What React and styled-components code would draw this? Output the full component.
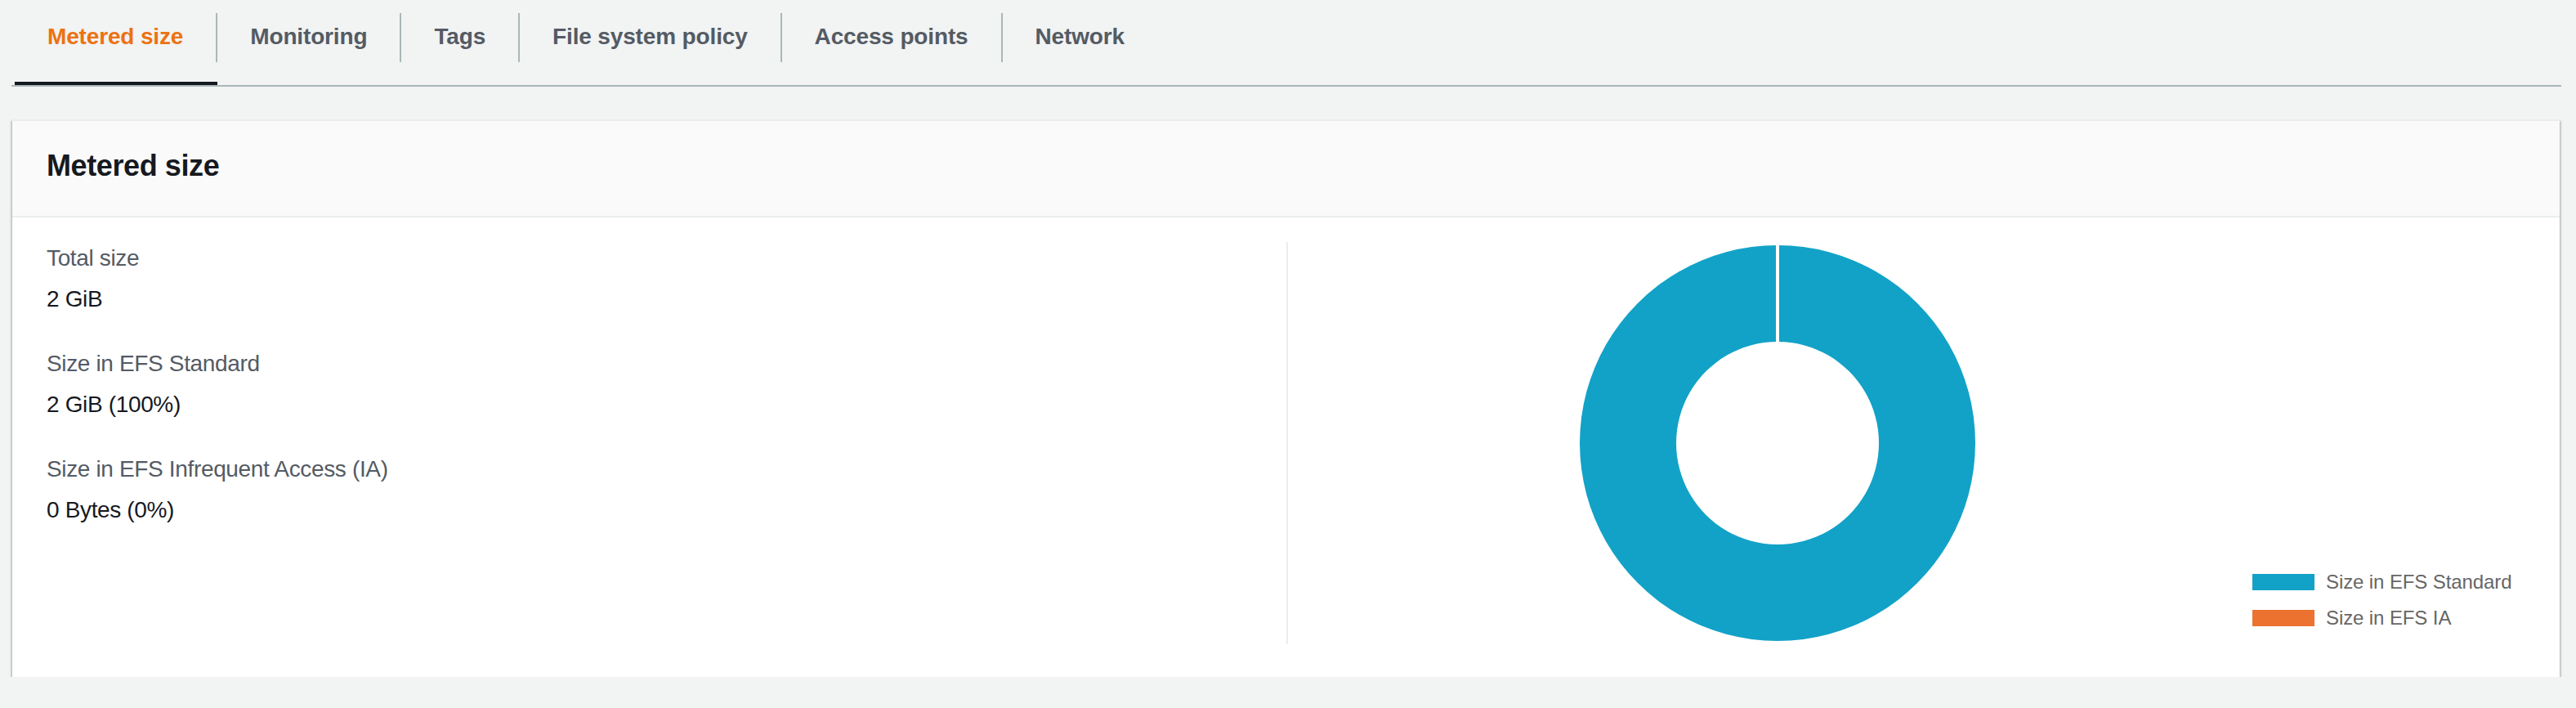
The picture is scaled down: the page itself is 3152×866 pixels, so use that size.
import React from 'react';
import styled, { createGlobalStyle } from 'styled-components';

// screenshot is a 2x capture, so every size here is doubled

const GlobalStyle = createGlobalStyle`
  html, body {
    margin: 0;
    padding: 0;
    background: #f2f3f3;
  }
  body {
    font-family: 'Liberation Sans', Arial, sans-serif;
    -webkit-font-smoothing: antialiased;
  }
`;

const Page = styled.div`
  padding: 0 18px 0 14px;
`;

const TabList = styled.ul`
  display: flex;
  margin: 0;
  padding: 0 0 0 4px;
  list-style: none;
  border-bottom: 2px solid #aab7b8;
`;

const Tab = styled.li`
  padding-top: 16px;
  border-bottom: 4px solid ${(p) => (p.active ? '#16191f' : 'transparent')};
`;

const TabLink = styled.a`
  display: block;
  margin-bottom: 24px;
  padding: 7px 40px 9px;
  line-height: 44px;
  font-size: 28px;
  font-weight: 700;
  letter-spacing: -0.15px;
  color: ${(p) => (p.active ? '#ec7211' : '#545b64')};
  border-right: 2px solid ${(p) => (p.last ? 'transparent' : '#aab7b8')};
  cursor: pointer;
  white-space: nowrap;
`;

const Card = styled.section`
  margin: 40px 2px 0 1px;
  background: #fff;
  border-top: 2px solid #eaeded;
  box-shadow: 0 2px 2px 0 rgba(0, 28, 36, 0.3), 2px 2px 2px 0 rgba(0, 28, 36, 0.15),
    -2px 2px 2px 0 rgba(0, 28, 36, 0.15);
`;

const CardHeader = styled.div`
  background: #fafafa;
  border-bottom: 2px solid #eaeded;
  padding: 31px 42px 37px;
`;

const Title = styled.h2`
  margin: 0;
  font-size: 36px;
  line-height: 48px;
  font-weight: 700;
  letter-spacing: -0.4px;
  color: #16191f;
`;

const CardBody = styled.div`
  display: grid;
  grid-template-columns: 1fr 1fr;
  padding: 30px 42px 40px;
`;

const Details = styled.div`
  display: flex;
  flex-direction: column;
  gap: 39px;
`;

const Pair = styled.div`
  display: flex;
  flex-direction: column;
  gap: 10px;
`;

const Label = styled.div`
  font-size: 28px;
  line-height: 40px;
  letter-spacing: -0.35px;
  color: #545b64;
`;

const Value = styled.div`
  font-size: 28px;
  line-height: 40px;
  letter-spacing: -0.35px;
  color: #16191f;
`;

const ChartColumn = styled.div`
  display: flex;
  height: 492px;
  border-left: 2px solid #eaeded;
  padding-left: 40px;
`;

const ChartArea = styled.div`
  flex: 1;
  display: flex;
  align-items: center;
  justify-content: center;
`;

const Legend = styled.ul`
  align-self: flex-end;
  display: flex;
  flex-direction: column;
  gap: 24px;
  width: 315px;
  margin: 0 19px 22px 22px;
  padding: 0;
  list-style: none;
`;

const LegendItem = styled.li`
  display: flex;
  align-items: center;
  gap: 14px;
  height: 20px;
  font-family: 'Liberation Sans', Helvetica, Arial, sans-serif;
  font-size: 24px;
  line-height: 24px;
  letter-spacing: -0.1px;
  color: #666;
  white-space: nowrap;
`;

const Swatch = styled.span`
  flex: none;
  width: 76px;
  height: 20px;
  background: ${(p) => p.color};
`;

const tabs = ['Metered size', 'Monitoring', 'Tags', 'File system policy', 'Access points', 'Network'];

const details = [
  { label: 'Total size', value: '2 GiB' },
  { label: 'Size in EFS Standard', value: '2 GiB (100%)' },
  { label: 'Size in EFS Infrequent Access (IA)', value: '0 Bytes (0%)' },
];

const STANDARD = '#12a2c7';
const IA = '#ec7230';

const Donut = ({ size = 484, inner = 124 }) => {
  const c = size / 2;
  const r = size / 2;
  const ring = `M ${c} ${c - r} A ${r} ${r} 0 1 1 ${c - 0.01} ${c - r} Z
    M ${c} ${c - inner} A ${inner} ${inner} 0 1 0 ${c + 0.01} ${c - inner} Z`;
  return (
    <svg width={size} height={size} viewBox={`0 0 ${size} ${size}`}>
      <path d={ring} fill={STANDARD} fillRule="evenodd" />
      <line x1={c} y1={0} x2={c} y2={c - inner + 1} stroke="#fff" strokeWidth="4" />
    </svg>
  );
};

export default function App() {
  return (
    <>
      <GlobalStyle />
      <Page>
        <TabList>
          {tabs.map((t, i) => (
            <Tab key={t} active={i === 0}>
              <TabLink active={i === 0} last={i === tabs.length - 1}>
                {t}
              </TabLink>
            </Tab>
          ))}
        </TabList>
        <Card>
          <CardHeader>
            <Title>Metered size</Title>
          </CardHeader>
          <CardBody>
            <Details>
              {details.map((d) => (
                <Pair key={d.label}>
                  <Label>{d.label}</Label>
                  <Value>{d.value}</Value>
                </Pair>
              ))}
            </Details>
            <ChartColumn>
              <ChartArea>
                <Donut />
              </ChartArea>
              <Legend>
                <LegendItem>
                  <Swatch color={STANDARD} />
                  Size in EFS Standard
                </LegendItem>
                <LegendItem>
                  <Swatch color={IA} />
                  Size in EFS IA
                </LegendItem>
              </Legend>
            </ChartColumn>
          </CardBody>
        </Card>
      </Page>
    </>
  );
}
